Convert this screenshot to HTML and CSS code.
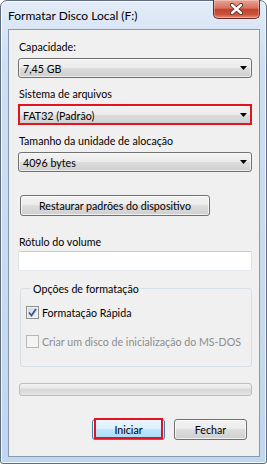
FILE: index.html
```html
<!DOCTYPE html>
<html lang="pt-BR">
<head>
    <meta charset="UTF-8">
    <title>Formatar Disco Local (F:)</title>
    <link rel="stylesheet" href="styles.css">
</head>
<body>
    <div class="window">
        <div class="titlebar">
            <span class="title">Formatar Disco Local (F:)</span>
            <button class="close-btn" aria-label="Fechar">
                <svg width="13" height="12" viewBox="0 0 13 12">
                    <path d="M2 2 L11 10 M11 2 L2 10" stroke="#5b2b24" stroke-width="4.2" stroke-linecap="round"/>
                    <path d="M2 2 L11 10 M11 2 L2 10" stroke="#fff" stroke-width="2.4" stroke-linecap="round"/>
                </svg>
            </button>
        </div>

        <div class="panel">
            <div class="field-label first">Capacidade:</div>
            <div class="combo">
                <span>7,45 GB</span>
                <svg class="arrow" width="7" height="4" viewBox="0 0 7 4"><path d="M0 0h7L3.5 4z"/></svg>
            </div>

            <div class="field-label">Sistema de arquivos</div>
            <div class="combo highlight">
                <span>FAT32 (Padrão)</span>
                <svg class="arrow" width="7" height="4" viewBox="0 0 7 4"><path d="M0 0h7L3.5 4z"/></svg>
            </div>

            <div class="field-label">Tamanho da unidade de alocação</div>
            <div class="combo">
                <span>4096 bytes</span>
                <svg class="arrow" width="7" height="4" viewBox="0 0 7 4"><path d="M0 0h7L3.5 4z"/></svg>
            </div>

            <button class="btn restore-btn">Restaurar padrões do dispositivo</button>

            <div class="field-label volume-label">Rótulo do volume</div>
            <div class="textbox"></div>

            <fieldset class="group">
                <legend>Opções de formatação</legend>
                <div class="check-row">
                    <span class="checkbox checked">
                        <svg width="9" height="9" viewBox="0 0 9 9"><path d="M1 4.5 L3.5 7.5 L8 1" fill="none" stroke="#3d5592" stroke-width="1.8"/></svg>
                    </span>
                    <span>Formatação Rápida</span>
                </div>
                <div class="check-row disabled">
                    <span class="checkbox"></span>
                    <span>Criar um disco de inicialização do MS-DOS</span>
                </div>
            </fieldset>

            <div class="progress"></div>

            <div class="actions">
                <button class="btn default-btn highlight">Iniciar</button>
                <button class="btn">Fechar</button>
            </div>
        </div>
    </div>
</body>
</html>
```

FILE: styles.css
```css
* {
    box-sizing: border-box;
}
body {
    margin: 0;
    font-family: Lato, "Noto Sans", sans-serif;
    font-size: 8pt;
    color: #000;
}
.window {
    width: 267px;
    height: 464px;
    display: flex;
    flex-direction: column;
    padding: 0 6px 6px 7px;
    background: linear-gradient(#e3ecf8, #cfdff2 60px, #c1d6ef);
    border: 1px solid #5f6d7f;
    border-radius: 7px 7px 3px 3px;
    box-shadow: inset 0 0 0 1px rgba(255, 255, 255, 0.75);
}
.titlebar {
    height: 28px;
    display: flex;
    align-items: flex-start;
}
.title {
    padding-top: 7px;
    font-size: 12px;
    line-height: 15px;
}
.close-btn {
    margin-left: auto;
    margin-top: -1px;
    width: 47px;
    height: 19px;
    padding: 0;
    display: flex;
    align-items: center;
    justify-content: center;
    border: 1px solid #6b2a20;
    border-top: none;
    border-radius: 0 0 5px 5px;
    background: linear-gradient(#e8a394, #d6735f 45%, #c3422b 52%, #c9533d 80%, #de8f7b);
    box-shadow: inset 0 0 0 1px rgba(255, 255, 255, 0.3);
}
.panel {
    flex: 1;
    display: flex;
    flex-direction: column;
    padding: 9px 7px 0 9px;
    background: #f0f0f0;
    border: 1px solid #8699b1;
}
.field-label {
    margin: 8px 0 4px 1px;
    line-height: 15px;
}
.field-label.first {
    margin-top: 0;
}
.combo {
    height: 20px;
    display: flex;
    align-items: center;
    justify-content: space-between;
    padding: 0 4px 0 4px;
    border: 1px solid #707070;
    border-radius: 3px;
    background: linear-gradient(#f2f2f2, #ebebeb 50%, #dddddd 50%, #cfcfcf);
    box-shadow: inset 0 0 0 1px rgba(255, 255, 255, 0.6);
}
/* red annotation boxes drawn over the control */
.highlight {
    position: relative;
}
.highlight::after {
    content: "";
    position: absolute;
    inset: -2px -1px -1px -1px;
    border: 2px solid #e3141f;
}
.default-btn.highlight::after {
    inset: -2px 1px 0 1px;
}
.btn {
    height: 21px;
    padding: 0;
    font-family: inherit;
    font-size: inherit;
    color: #000;
    border: 1px solid #707070;
    border-radius: 3px;
    background: linear-gradient(#f2f2f2, #ebebeb 50%, #dddddd 50%, #cfcfcf);
    box-shadow: inset 0 0 0 1px rgba(255, 255, 255, 0.7);
}
.restore-btn {
    margin: 23px 0 0 2px;
    width: 190px;
}
.volume-label {
    margin-top: 18px;
    margin-bottom: 2px;
}
.textbox {
    height: 20px;
    background: #fff;
    border: 1px solid;
    border-color: #c6ccd4 #dde1e7 #e3e9ef #dde1e7;
    border-radius: 2px;
}
.group {
    margin: 10px 0 0 2px;
    padding: 9px 0 17px 5px;
    border: 1px solid #d5dfe5;
    border-radius: 3px;
    min-width: 0;
}
.group legend {
    margin-left: 5px;
    padding: 0 2px;
    line-height: 15px;
}
.check-row {
    display: flex;
    align-items: flex-start;
    line-height: 15px;
    white-space: nowrap;
}
.check-row + .check-row {
    margin-top: 14px;
}
.checkbox {
    flex: none;
    width: 13px;
    height: 13px;
    margin: 1px 3px 0 0;
    display: flex;
    align-items: center;
    justify-content: center;
    border: 1px solid #8e8f8f;
    background: linear-gradient(135deg, #cfd3d9, #f4f5f6);
    box-shadow: inset 0 0 0 1px #f4f4f4;
}
.check-row.disabled {
    color: #8d8d8d;
}
.check-row.disabled .checkbox {
    border-color: #b8b8b8;
    background: #f4f4f4;
}
.progress {
    margin: 16px 0 0 1px;
    height: 13px;
    border: 1px solid #bcbcbc;
    border-radius: 3px;
    background: linear-gradient(#f4f4f4, #e8e8e8 35%, #d6d6d6 55%, #e6e6e6);
}
.actions {
    margin: 23px 5px 0 0;
    display: flex;
    justify-content: flex-end;
    gap: 9px;
}
.actions .btn {
    width: 73px;
}
.default-btn {
    border-color: #3c7fb1;
    background: linear-gradient(#eaf6fd, #d9f0fc 50%, #bee6fd 50%, #a7d9f5);
    box-shadow: inset 0 0 0 1px rgba(255, 255, 255, 0.6);
}
```
